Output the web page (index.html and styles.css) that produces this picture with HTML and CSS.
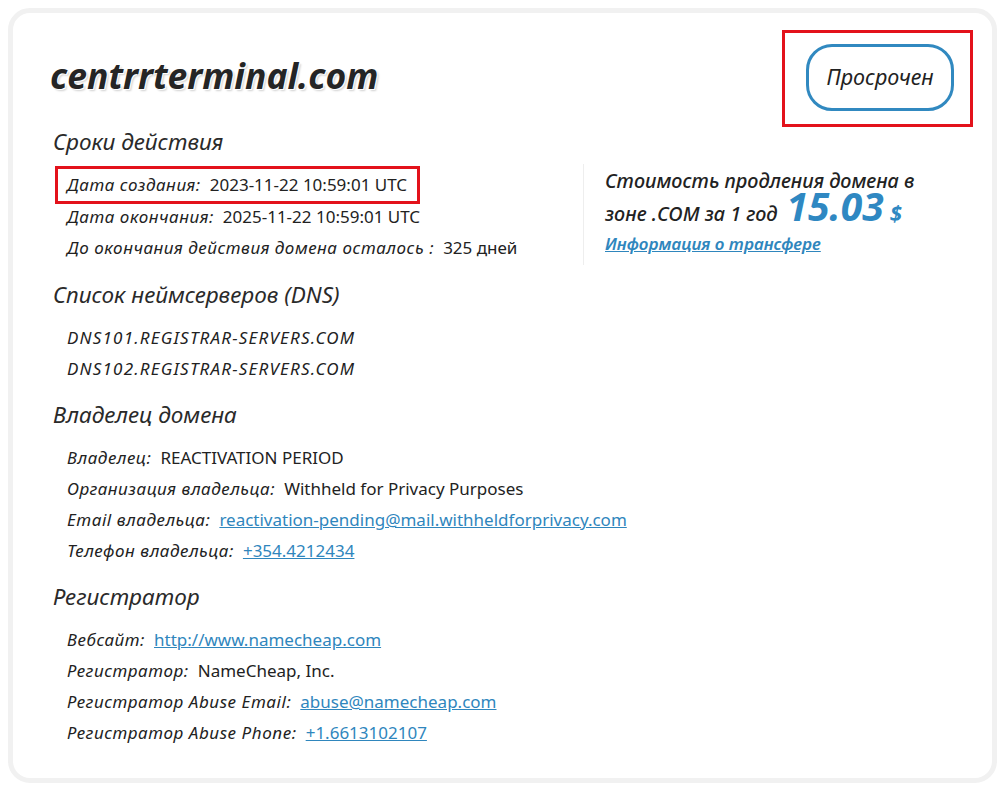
FILE: index.html
```html
<!DOCTYPE html>
<html lang="ru">
<head>
<meta charset="utf-8">
<title>centrrterminal.com</title>
<link rel="stylesheet" href="styles.css">
</head>
<body>
<div class="card">
  <div class="header">
    <h1 class="domain">centrrterminal.com</h1>
    <div class="mark mark-status">
      <div class="badge">Просрочен</div>
    </div>
  </div>

  <h2 class="heading">Сроки действия</h2>
  <div class="split">
    <div class="left">
      <div class="row mark mark-row"><span class="label">Дата создания:</span><span class="value">2023-11-22 10:59:01 UTC</span></div>
      <div class="row"><span class="label">Дата окончания:</span><span class="value">2025-11-22 10:59:01 UTC</span></div>
      <div class="row"><span class="label">До окончания действия домена осталось :</span><span class="value">325 дней</span></div>
    </div>
    <div class="right">
      <div class="price-text">Стоимость продления домена в зоне .COM за 1 год <span class="price">15.03</span><span class="cur">$</span></div>
      <a class="transfer" href="#">Информация о трансфере</a>
    </div>
  </div>

  <h2 class="heading">Список неймсерверов (DNS)</h2>
  <div class="rows">
    <div class="row ns">DNS101.REGISTRAR-SERVERS.COM</div>
    <div class="row ns">DNS102.REGISTRAR-SERVERS.COM</div>
  </div>

  <h2 class="heading">Владелец домена</h2>
  <div class="rows">
    <div class="row"><span class="label">Владелец:</span><span class="value">REACTIVATION PERIOD</span></div>
    <div class="row"><span class="label">Организация владельца:</span><span class="value">Withheld for Privacy Purposes</span></div>
    <div class="row"><span class="label">Email владельца:</span><a class="value link" href="#">reactivation-pending@mail.withheldforprivacy.com</a></div>
    <div class="row"><span class="label">Телефон владельца:</span><a class="value link" href="#">+354.4212434</a></div>
  </div>

  <h2 class="heading">Регистратор</h2>
  <div class="rows">
    <div class="row"><span class="label">Вебсайт:</span><a class="value link" href="#">http://www.namecheap.com</a></div>
    <div class="row"><span class="label">Регистратор:</span><span class="value">NameCheap, Inc.</span></div>
    <div class="row"><span class="label">Регистратор Abuse Email:</span><a class="value link" href="#">abuse@namecheap.com</a></div>
    <div class="row"><span class="label">Регистратор Abuse Phone:</span><a class="value link" href="#">+1.6613102107</a></div>
  </div>
</div>
</body>
</html>
```

FILE: styles.css
```css
* { box-sizing: border-box; }

body {
  margin: 8px;
  background: #ffffff;
  font-family: "Noto Sans", "Open Sans", sans-serif;
  color: #222222;
}

.card {
  border: 5px solid #f1f1f1;
  border-radius: 22px;
  padding: 17px 19px 26px 37px;
  margin-right: 2px;
  height: 775px;
}

.header {
  display: flex;
  justify-content: space-between;
  align-items: center;
}

.domain {
  margin: 0 0 8px 0;
  font-size: 35.5px;
  line-height: 40px;
  font-weight: 700;
  font-style: italic;
  color: #252525;
  text-shadow: 1px 1px 0 #ffffff, 2px 2px 2px rgba(0, 0, 0, 0.18);
}

.mark {
  border: 3px solid #e3121b;
}

.mark-status {
  padding: 11px 16px 13px 21px;
}

.badge {
  width: 148px;
  height: 67px;
  border: 3px solid #3189c0;
  border-radius: 26px;
  display: flex;
  align-items: center;
  justify-content: center;
  font-style: italic;
  font-size: 21.5px;
  color: #222;
  padding-bottom: 2px;
}

.heading {
  margin: 0 0 12px 3px;
  font-size: 22.5px;
  line-height: 30px;
  font-weight: 400;
  font-style: italic;
  color: #2a2a2a;
}

.split {
  display: flex;
  margin-bottom: 15px;
}

.left {
  width: 533px;
  padding-left: 17px;
}

.right {
  border-left: 1px solid #eeeeee;
  padding: 0 0 8px 21px;
  width: 360px;
  margin-top: -5px;
}

.rows {
  padding-left: 17px;
  margin-bottom: 16px;
}

.row {
  display: flex;
  align-items: baseline;
  line-height: 31px;
  font-size: 17px;
  white-space: nowrap;
}

.mark-row {
  width: fit-content;
  margin: -3px 0 -3px -12px;
  padding: 0 10px 0 9px;
  line-height: 32px;
}

.label {
  font-style: italic;
  letter-spacing: 0.55px;
  margin-right: 9px;
  color: #222;
}

.value {
  color: #222;
}

.link {
  color: #2f86bd;
  text-decoration: underline;
}

.ns {
  font-style: italic;
  letter-spacing: 1.2px;
}

.price-text {
  font-style: italic;
  font-size: 19.8px;
  line-height: 33px;
  font-weight: 500;
  color: #222;
}

.price {
  font-size: 39px;
  font-weight: 700;
  color: #2f88c2;
  margin-left: 4px;
  line-height: 16px;
}

.cur {
  font-size: 22px;
  font-weight: 700;
  color: #2f88c2;
  margin-left: 6px;
  line-height: 16px;
}

.transfer {
  display: block;
  margin-top: 1px;
  font-style: italic;
  font-size: 17px;
  font-weight: 600;
  line-height: 26px;
  color: #2f86bd;
  text-decoration: underline;
}
```
